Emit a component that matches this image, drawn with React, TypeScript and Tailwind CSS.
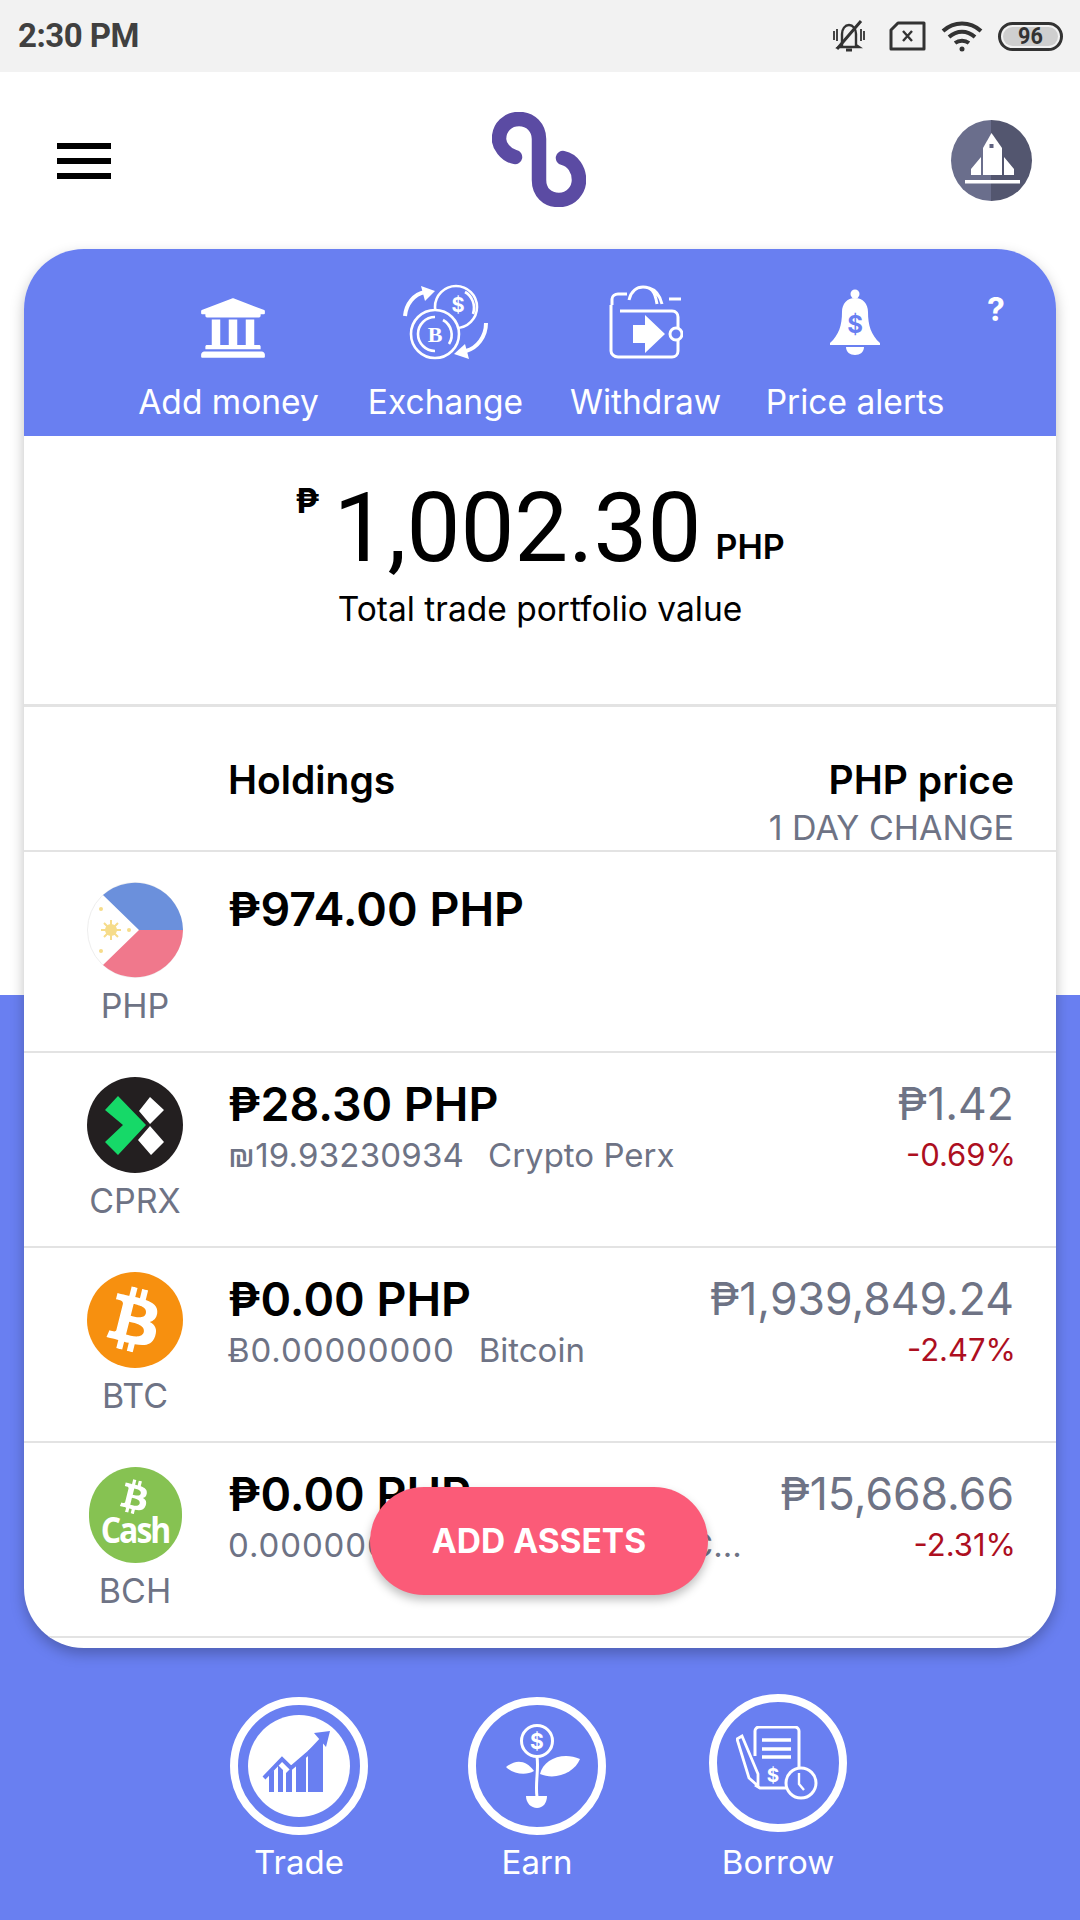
import { FaBtc, FaUniversity } from "react-icons/fa";

const ui = "font-['Inter','Noto_Sans',sans-serif]";

const StatusBar = () => (
    <div className="h-[72px] bg-[#f2f2f2] flex items-center justify-between pl-[18px] pr-[17px]">
        <span className="font-['Roboto',sans-serif] font-bold text-[33px] tracking-[-0.5px] text-[#404040]">2:30 PM</span>
        <div className="flex items-center text-[#333]">
            {/* muted bell */}
            <svg width="38" height="34" viewBox="0 0 38 34" fill="none" stroke="currentColor" strokeWidth="2.4">
                <path d="M12 26V15c0-5 3-9 7-9s7 4 7 9v11l3 2H9z" />
                <path d="M16 31h6M7 30 31 2" strokeWidth="3" />
                <path d="M4 12v9M7 10v12M31 10v12M34 12v9" strokeWidth="1.8" />
            </svg>
            {/* sim */}
            <svg className="ml-[21px]" width="37" height="30" viewBox="0 0 37 30" fill="none" stroke="currentColor" strokeWidth="3">
                <path d="M9 2h26v26H2V9z" strokeLinejoin="round" />
                <path d="M14 10l9 10M23 10l-9 10" strokeWidth="2.4" />
            </svg>
            {/* wifi */}
            <svg className="ml-[14px]" width="44" height="32" viewBox="0 0 44 32" fill="none" stroke="currentColor" strokeWidth="4">
                <path d="M3 11c11-10 27-10 38 0M9 17c8-7 18-7 26 0M15 23c4-3 10-3 14 0" />
                <circle cx="22" cy="29" r="2.5" fill="currentColor" stroke="none" />
            </svg>
            {/* battery */}
            <div className="ml-[14px] w-[65px] h-[29px] rounded-full border-[3px] border-[#333] p-[2px] relative">
                <div className="w-full h-full rounded-full bg-[#cfcfcf]" />
                <span className="absolute inset-0 flex items-center justify-center font-['Roboto',sans-serif] font-bold text-[24px] leading-none scale-x-90">96</span>
            </div>
        </div>
    </div>
);

const TopNav = () => (
    <div className="h-[177px] flex items-center justify-between pl-[57px] pr-[48px] relative">
        <div className="w-[54px] flex flex-col gap-[9px]">
            <div className="h-[6px] bg-black" />
            <div className="h-[6px] bg-black" />
            <div className="h-[6px] bg-black" />
        </div>
        <svg className="absolute left-[492px] top-[40px]" width="94" height="95" viewBox="0 0 94 95" fill="none" stroke="#5b4ba3" strokeWidth="14.5" strokeLinecap="round">
            <path d="M23 45C13 43 7 33 7 27 7 15 16 7 27 7c12 0 20 9 20 20v41c0 12 8 20 20 20 12 0 20-10 20-20 0-10-6-20-16-22" />
        </svg>
        <div className="w-[81px] h-[81px] rounded-full overflow-hidden bg-[linear-gradient(90deg,#6a6e8c_50%,#53566f_50%)]">
            <svg width="81" height="81" viewBox="0 0 81 81" fill="white">
                <path d="M40.5 13 51 28V55H32V28z" />
                <path d="M30 37V55H20V49zM53 37V55H63V49z" />
                <rect x="14" y="60" width="55" height="3.5" />
                <rect x="38.5" y="24" width="4" height="4" fill="#5f6280" />
            </svg>
        </div>
    </div>
);

const ExchangeIcon = () => (
    <svg width="85" height="76" viewBox="0 0 85 76" fill="none" stroke="white" strokeWidth="2.6">
        <circle cx="53" cy="23" r="21" />
        <path d="M62 8c7 4 11 13 8 22" />
        <circle cx="32" cy="50" r="24" fill="#697ff1" />
        <path d="M32 33a17 17 0 0 0 0 34M40 36a17 17 0 0 1 6 24" />
        <text x="32" y="58" fontSize="22" fontWeight="700" fontFamily="Liberation Serif" fill="white" stroke="none" textAnchor="middle">B</text>
        <text x="55" y="28" fontSize="20" fontWeight="700" fontFamily="Inter" fill="white" stroke="none" textAnchor="middle">$</text>
        <path d="M2 32C3 20 11 10 22 8" strokeWidth="4" />
        <path d="M18 2l14 5-10 10z" fill="white" stroke="none" />
        <path d="M83 39c0 14-9 25-20 28" strokeWidth="4" />
        <path d="M66 75l-15-5 11-10z" fill="white" stroke="none" />
    </svg>
);

const WalletIcon = () => (
    <svg width="74" height="74" viewBox="0 0 74 74" fill="none" stroke="white" strokeWidth="3">
        <path d="M3 20V14c0-3 3-5 6-5h9M60 14h12M20 15C22 6 28 2 34 2c8 0 12 4 14 17M40 3c7 2 11 8 13 16" />
        <path d="M11 26h52c4 0 6 3 6 6v34c0 4-3 6-6 6H9c-4 0-7-3-7-6V20" />
        <path d="M24 40h12V30l20 19-20 19V58H24z" fill="white" stroke="none" />
        <circle cx="67" cy="49" r="6" fill="#697ff1" />
    </svg>
);

const BellIcon = () => (
    <svg width="52" height="66" viewBox="0 0 52 66" fill="white">
        <circle cx="26" cy="5" r="4.5" />
        <path d="M26 9c-8 0-13 6-13 14 0 13-3 23-12 31v2h50v-2c-9-8-12-18-12-31 0-8-5-14-13-14z" />
        <path d="M17 58h18c0 5-4 8-9 8s-9-3-9-8z" />
        <text x="26" y="44" fontSize="24" fontWeight="700" fontFamily="Inter" fill="#697ff1" textAnchor="middle">$</text>
    </svg>
);

const actions = [
    { label: "Add money", w: "w-[183px]", icon: <FaUniversity className="w-[68px] h-[68px] text-white ml-[8px] mt-[11px]" /> },
    { label: "Exchange", w: "w-[155px]", icon: <ExchangeIcon /> },
    { label: "Withdraw", w: "w-[149px]", icon: <WalletIcon /> },
    { label: "Price alerts", w: "w-[174px]", icon: <BellIcon /> },
];

const ActionBar = () => (
    <div className={`h-[187px] bg-[#697ff1] flex pl-[113px] gap-[48px] ${ui}`}>
        {actions.map((a) => (
            <div key={a.label} className={`${a.w} flex flex-col items-center`}>
                <div className="h-[111px] pt-[35px] flex items-center justify-center">{a.icon}</div>
                <span className="mt-[23px] whitespace-nowrap text-white text-[33.5px] leading-[38px]">{a.label}</span>
            </div>
        ))}
        <span className="text-white font-bold text-[32px] leading-none mt-[45px] -ml-[3px]">?</span>
    </div>
);

const Portfolio = () => (
    <div className={`h-[271px] flex flex-col items-center border-b-[3px] border-[#e3e3e3] ${ui}`}>
        <div className="flex items-start mt-[33px] h-[118px]">
            <span className="font-bold text-[34px] leading-none mt-[15px] mr-[14px]">₱</span>
            <span className="font-['Roboto',sans-serif] text-[96px] leading-[118px] text-black">1,002.30</span>
            <span className="font-semibold text-[34px] leading-none ml-[14px] mt-[61px]">PHP</span>
        </div>
        <span className="mt-[2px] text-[33.5px] leading-[40px] text-black">Total trade portfolio value</span>
    </div>
);

const HoldingsHead = () => (
    <div className={`h-[145px] flex justify-between pl-[204px] pr-[42px] pt-[50px] border-b-2 border-[#e3e3e3] ${ui}`}>
        <span className="font-semibold text-[39px] leading-[46px] text-black">Holdings</span>
        <div className="text-right">
            <div className="font-semibold text-[39px] leading-[46px] text-black">PHP price</div>
            <div className="mt-[2px] text-[34px] leading-[46px] text-[#6e7385]">1 DAY CHANGE</div>
        </div>
    </div>
);

const PhpFlag = () => (
    <svg width="96" height="96" viewBox="0 0 96 96">
        <circle cx="48" cy="48" r="47.5" fill="#fff" stroke="#eee" />
        <path d="M16 13A48 48 0 0 1 96 48H52z" fill="#6b90dc" />
        <path d="M16 83A48 48 0 0 0 96 48H52z" fill="#f0788c" />
        <circle cx="24" cy="48" r="6" fill="#f6dc8a" />
        <path d="M14 48h20M24 38v20M17 41l14 14M31 41l-14 14" stroke="#f6dc8a" strokeWidth="2" />
        <circle cx="14" cy="27" r="2" fill="#f6dc8a" />
        <circle cx="14" cy="69" r="2" fill="#f6dc8a" />
        <circle cx="42" cy="48" r="2" fill="#f6dc8a" />
    </svg>
);

const CprxLogo = () => (
    <svg width="96" height="96" viewBox="0 0 96 96">
        <circle cx="48" cy="48" r="48" fill="#231f20" />
        <path d="M31 19 59 48 31 78 18 65 36 48 18 33z" fill="#16d968" />
        <path d="M63 20 77 33 63 47 52 34zM63 49 77 65 64 78 51 63z" fill="#fff" />
    </svg>
);

const BtcLogo = () => (
    <div className="w-[96px] h-[96px] rounded-full bg-[#f7900f] flex items-center justify-center">
        <FaBtc className="w-[64px] h-[64px] text-white rotate-[14deg]" />
    </div>
);

const BchLogo = () => (
    <div className="w-[93px] h-[96px] rounded-full bg-[#86c252] flex flex-col items-center text-white font-['Open_Sans',sans-serif]">
        <FaBtc className="w-[30px] h-[34px] mt-[13px] rotate-[14deg]" />
        <span className="font-bold text-[32px] leading-[32px] tracking-[-2px] scale-y-110">Cash</span>
    </div>
);

const rows = [
    { sym: "PHP", logo: <PhpFlag />, amount: "₱974.00 PHP", sub: "", track: "", gap: "", name: "", price: "", change: "", h: "h-[201px]", pt: "pt-[30px]" },
    { sym: "CPRX", logo: <CprxLogo />, amount: "₱28.30 PHP", sub: "₪19.93230934", track: "tracking-[0.2px]", gap: "ml-[24px]", name: "Crypto Perx", price: "₱1.42", change: "-0.69%", h: "h-[195px]", pt: "pt-[24px]" },
    { sym: "BTC", logo: <BtcLogo />, amount: "₱0.00 PHP", sub: "Ƀ0.00000000", track: "tracking-[0.9px]", gap: "ml-[24px]", name: "Bitcoin", price: "₱1,939,849.24", change: "-2.47%", h: "h-[195px]", pt: "pt-[24px]" },
    { sym: "BCH", logo: <BchLogo />, amount: "₱0.00 PHP", sub: "0.00000000", track: "tracking-[0.9px]", gap: "ml-[31px]", name: "Bitcoin Cash BC...", price: "₱15,668.66", change: "-2.31%", h: "h-[195px]", pt: "pt-[24px]" },
];

const HoldingRow = ({ r }: { r: (typeof rows)[number] }) => (
    <div className={`${r.h} ${r.pt} flex border-b-2 border-[#e3e3e3] ${ui}`}>
        <div className="w-[204px] pl-[63px] shrink-0">
            <div className="w-[96px] flex flex-col items-center">
                <div className="h-[96px] flex items-center">{r.logo}</div>
                <span className="mt-[8px] text-[34px] leading-[40px] text-[#6e7385]">{r.sym}</span>
            </div>
        </div>
        <div className="flex-1 min-w-0 pr-[42px]">
            <div className="flex justify-between items-start">
                <span className="font-semibold text-[46.5px] leading-[54px] text-black whitespace-nowrap">{r.amount}</span>
                <span className="font-normal text-[44.5px] leading-[54px] text-[#6e7385] whitespace-nowrap">{r.price}</span>
            </div>
            {r.sub && (
                <div className="mt-[2px] flex justify-between items-center text-[33px] leading-[44px] text-[#6e7385]">
                    <span className="whitespace-nowrap">
                        <span className={r.track}>{r.sub}</span>
                        <span className={r.gap}>{r.name}</span>
                    </span>
                    <span className="text-[31px] -mr-[2px] text-[#ad0f1f]">{r.change}</span>
                </div>
            )}
        </div>
    </div>
);

const TradeIcon = () => (
    <svg width="102" height="102" viewBox="0 0 102 102">
        <circle cx="51" cy="51" r="51" fill="#fff" />
        <path d="M21 77V60l5-5v22zM30 77V50l5 5v22zM38 77V58l6-6v25zM48 77V48l10-10v39zM60 77V36l15-16v57z" fill="#697ff1" />
        <path d="M16 63 34 44 43 53 78 23" fill="none" stroke="#697ff1" strokeWidth="4" />
        <path d="M66 18 82 16 78 32z" fill="#697ff1" />
    </svg>
);

const EarnIcon = () => (
    <svg width="86" height="84" viewBox="-12 0 86 84" fill="none" stroke="white">
        <circle cx="31" cy="17" r="15.5" strokeWidth="3" />
        <text x="31" y="25" fontSize="21" fontWeight="700" fontFamily="Inter" fill="white" stroke="none" textAnchor="middle">$</text>
        <path d="M31 33c2 12-2 26 0 40" strokeWidth="3" />
        <path d="M28 47C20 36 10 35 0 43c7 7 20 9 28 4z" fill="white" stroke="none" />
        <path d="M34 50c3-14 22-23 40-15-5 13-24 22-40 15z" fill="white" stroke="none" />
        <path d="M20 72h21c0 7-4 12-10 12s-11-5-11-12z" fill="white" stroke="none" />
    </svg>
);

const BorrowIcon = () => (
    <svg width="84" height="74" viewBox="0 0 84 74" fill="none" stroke="white" strokeWidth="3">
        <path d="M19 30V5c0-2 2-4 4-4h36c2 0 4 2 4 4v38M50 62H24l-5-3" />
        <path d="M26 14h29M26 23h29M26 31h29" strokeWidth="3.5" />
        <path d="M1 13 6 10 22 48 22 60 13 52z" strokeWidth="2.8" />
        <text x="37" y="56" fontSize="19" fontWeight="700" fontFamily="Inter" fill="white" stroke="none" textAnchor="middle">$</text>
        <circle cx="65" cy="57" r="15" fill="#697ff1" strokeWidth="3" />
        <path d="M63 47v11l5 6" strokeWidth="2.4" />
    </svg>
);

const BottomNav = () => (
    <div className={`flex items-start pl-[230px] mt-[49px] ${ui}`}>
        <div className="w-[138px] flex flex-col items-center">
            <div className="w-[138px] h-[138px] rounded-full border-[8px] border-white flex items-center justify-center">
                <TradeIcon />
            </div>
            <span className="mt-[7px] text-white text-[33px] leading-[40px]">Trade</span>
        </div>
        <div className="w-[138px] ml-[100px] flex flex-col items-center">
            <div className="w-[138px] h-[138px] rounded-full border-[8px] border-white flex items-center justify-center">
                <EarnIcon />
            </div>
            <span className="mt-[7px] text-white text-[33px] leading-[40px]">Earn</span>
        </div>
        <div className="w-[138px] ml-[103px] flex flex-col items-center -mt-[3px]">
            <div className="w-[138px] h-[138px] rounded-full border-[8px] border-white flex items-center justify-center">
                <BorrowIcon />
            </div>
            <span className="mt-[10px] text-white text-[33px] leading-[40px]">Borrow</span>
        </div>
    </div>
);

export default function App() {
    return (
        <main className="w-[1080px] h-[1920px] overflow-hidden bg-[linear-gradient(180deg,#fff_995px,#697ff1_995px)]">
            <StatusBar />
            <TopNav />
            <div className="relative mx-6 h-[1399px] bg-white rounded-[60px] overflow-hidden shadow-[0_6px_14px_rgba(0,0,0,0.25)]">
                <ActionBar />
                <Portfolio />
                <HoldingsHead />
                {rows.map((r) => (
                    <HoldingRow key={r.sym} r={r} />
                ))}
                {/* floating button sits over the last row */}
                <button className={`absolute left-[346px] top-[1238px] w-[338px] h-[108px] rounded-full bg-[#fb5b78] text-white font-bold text-[33.5px] shadow-[0_5px_10px_rgba(0,0,0,0.25)] ${ui}`}>
                    ADD ASSETS
                </button>
            </div>
            <BottomNav />
        </main>
    );
}
